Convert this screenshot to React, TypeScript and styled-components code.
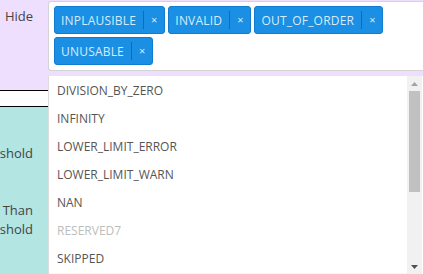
import { createGlobalStyle, styled } from 'styled-components'

const GlobalStyle = createGlobalStyle`
html, body {
    margin: 0;
    padding: 0;
    overflow: hidden;
    background: #ffffff;
    font-family: "Open Sans", "Liberation Sans", sans-serif;
}
`

const selected = ['INPLAUSIBLE', 'INVALID', 'OUT_OF_ORDER', 'UNUSABLE']

const options = [
    { name: 'DIVISION_BY_ZERO' },
    { name: 'INFINITY' },
    { name: 'LOWER_LIMIT_ERROR' },
    { name: 'LOWER_LIMIT_WARN' },
    { name: 'NAN' },
    { name: 'RESERVED7', disabled: true },
    { name: 'SKIPPED' },
    { name: '', active: true },
]

const App = () => {
    return (
        <Page>
            <GlobalStyle />
            <HideRow>
                <Label>Hide</Label>
                <Field>
                    <Select>
                        {selected.map((s) => (
                            <Tag key={s}>
                                <TagText>{s}</TagText>
                                <Remove>×</Remove>
                            </Tag>
                        ))}
                    </Select>
                </Field>
                <Menu>
                    <List>
                        {options.map((o, i) => (
                            <Option key={i} $disabled={o.disabled} $active={o.active}>
                                {o.name}
                            </Option>
                        ))}
                    </List>
                    <Scrollbar>
                        <Arrow>
                            <svg width="7" height="4" viewBox="0 0 7 4"><polygon points="0,4 7,4 3.5,0" fill="#a3a3a3" /></svg>
                        </Arrow>
                        <Track>
                            <Thumb />
                        </Track>
                        <Arrow>
                            <svg width="7" height="4" viewBox="0 0 7 4"><polygon points="0,0 7,0 3.5,4" fill="#505050" /></svg>
                        </Arrow>
                    </Scrollbar>
                </Menu>
            </HideRow>
            <Spacer />
            <ThresholdRow>
                <LabelLine>Threshold</LabelLine>
                <Gap />
                <LabelLine>Greater Than</LabelLine>
                <LabelLine>Threshold</LabelLine>
            </ThresholdRow>
        </Page>
    )
}

export default App;

const Page = styled.div`
width: 423px;
height: 274px;
display: flex;
flex-direction: column;
`
const HideRow = styled.div`
position: relative;
display: flex;
align-items: flex-start;
height: 91px;
padding-top: 1px;
box-sizing: border-box;
background: #efdfff;
border-bottom: 1px solid #000;
`
const Label = styled.div`
width: 33px;
margin-right: 15px;
margin-top: 6px;
display: flex;
justify-content: flex-end;
white-space: nowrap;
font-size: 13px;
color: #444;
`
const Field = styled.div`
flex: 1;
`
const Select = styled.div`
height: 70px;
box-sizing: border-box;
border: 1px solid #d4d4d4;
border-right: none;
border-radius: 3px 0 0 3px;
background: #fff;
padding: 4px 5px;
display: flex;
flex-wrap: wrap;
align-content: flex-start;
gap: 3px;
`
const Tag = styled.div`
height: 28px;
box-sizing: border-box;
display: flex;
align-items: center;
background: #1b8fe3;
border: 1px solid #0f7cd0;
border-radius: 3px;
color: #d6ecfc;
font-size: 12px;
`
const TagText = styled.span`
padding: 0 7px 0 6px;
letter-spacing: 0.2px;
`
const Remove = styled.span`
height: 18px;
line-height: 17px;
border-left: 1px solid #0d6cb6;
padding: 0 7px 0 7px;
font-size: 11px;
`
const Menu = styled.div`
position: absolute;
left: 48px;
right: 0;
top: 76px;
height: 198px;
display: flex;
background: #fff;
border-left: 1px solid #dcdcdc;
z-index: 2;
`
const List = styled.div`
flex: 1;
overflow: hidden;
padding-top: 1px;
`
const Option = styled.div<{ $disabled?: boolean; $active?: boolean }>`
height: 28px;
line-height: 28px;
padding-left: 8px;
font-size: 12px;
color: ${(p) => (p.$disabled ? '#bdbdbd' : '#555')};
background: ${(p) => (p.$active ? '#f2f8fd' : '#fff')};
white-space: nowrap;
`
const Scrollbar = styled.div`
width: 15px;
margin-right: 1px;
display: flex;
flex-direction: column;
background: #f1f1f1;
`
const Arrow = styled.div`
height: 15px;
display: flex;
align-items: center;
justify-content: center;
`
const Track = styled.div`
flex: 1;
padding: 0 2px;
`
const Thumb = styled.div`
height: 101px;
background: #c1c1c1;
`
const Spacer = styled.div`
height: 15px;
background: #fff;
border-bottom: 1px solid #000;
`
const ThresholdRow = styled.div`
flex: 1;
background: #b3e5e3;
padding-top: 37px;
display: flex;
flex-direction: column;
`
const LabelLine = styled.div`
width: 33px;
display: flex;
justify-content: flex-end;
white-space: nowrap;
font-size: 13px;
line-height: 19px;
color: #444;
`
const Gap = styled.div`
height: 38px;
`
